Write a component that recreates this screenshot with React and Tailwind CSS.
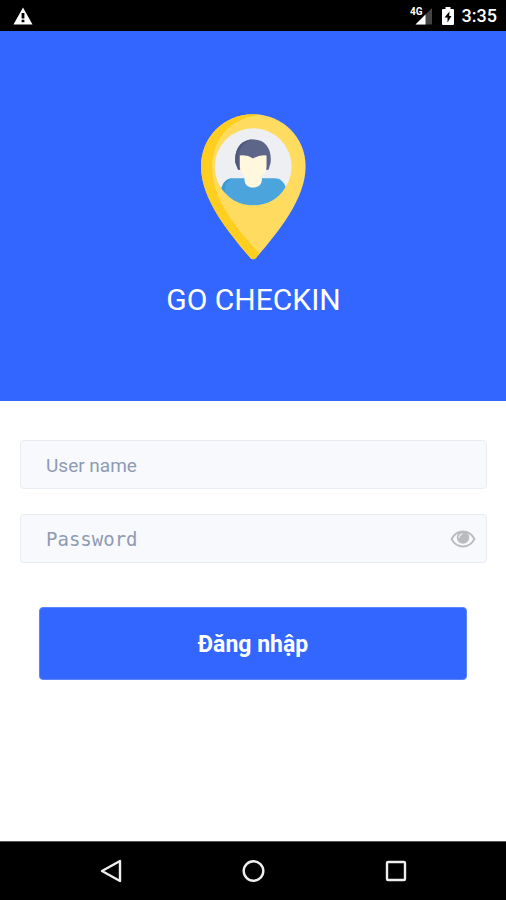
import React, { useState } from 'react';

const StatusBar = () => (
  <div className="flex h-[31px] items-center justify-between bg-black pl-[13px] pr-[9px] pt-px text-white">
    <svg className="h-[18px] w-5" viewBox="0 0 20 18" aria-hidden="true">
      <path d="M10 0.500 19.500 17.500H0.500Z" fill="#fff" />
      <path d="M8.600 6h2.800v5.400H8.600zM8.600 12.800h2.800v2.400H8.600z" fill="#000" />
    </svg>
    <div className="flex items-center">
      {/* 4G signal */}
      <svg className="mr-[9px] h-5 w-[23px]" viewBox="0 0 23 20" aria-hidden="true">
        <path d="M22 2V18.500H5.500Z" fill="#444" />
        <path d="M15.500 8.500V18.500H5.500Z" fill="#fff" />
        <text x="0" y="9" fill="#fff" fontSize="10" fontWeight="700" fontFamily="Roboto, sans-serif">4G</text>
      </svg>
      {/* Battery */}
      <svg className="mr-2 h-5 w-3" viewBox="0 0 12 20" aria-hidden="true">
        <path d="M1 3h2.500V1h5v2H11q1 0 1 1v14q0 1-1 1H1q-1 0-1-1V4q0-1 1-1z" fill="#fff" />
        <path d="M7.500 5.500 2.500 11.500H5.500V16.500L9.500 10H7.200Z" fill="#000" />
      </svg>
      <span className="text-lg leading-5 font-medium">3:35</span>
    </div>
  </div>
);

const PinLogo = () => (
  <svg className="h-[146px] w-[105px]" viewBox="65 41 314 437" aria-hidden="true">
    <path
      d="M221 42C134 42 65 110 65 198C65 296 148 396 212 471Q221 481 230 471C294 396 378 296 378 198C378 110 308 42 221 42Z"
      fill="#ffdc5f"
    />
    <path
      d="M221 42C134 42 65 110 65 198C65 296 148 396 212 471Q221 481 230 471L240 459C168 380 98 296 98 198C98 120 150 54 241 43Z"
      fill="#ffce1e"
    />
    <circle cx="221" cy="199" r="115" fill="#edeff3" />
    <path d="M126 263C132 244 142 233 160 233H285C302 233 313 243 318 260C295 297 262 314 221 314C180 314 148 296 126 263Z" fill="#4ba5dc" />
    <path d="M126 263C132 244 142 233 160 233C143 239 137 252 136 275Q130 270 126 263Z" fill="#3c9bd2" />
    <path d="M168 188C163 146 184 117 221 117C258 117 278 146 273 188L267 208H176Z" fill="#5d6589" />
    <path d="M168 188C164 146 184 117 221 117C190 124 177 145 177 176L180 208H176Z" fill="#50587c" />
    <path
      d="M181 165Q203 162 221 174Q239 162 261 165V198Q261 216 247 225V237C247 252 237 261 221 261C205 261 195 252 195 237V225Q181 216 181 198Z"
      fill="#fff7de"
    />
  </svg>
);

const EyeIcon = () => (
  <svg className="h-[18px] w-[26px]" viewBox="0 0 26 18" fill="none" aria-hidden="true">
    <path d="M1.500 9C7-1 19-1 24.500 9C19 19 7 19 1.500 9Z" stroke="#b9bbbd" strokeWidth="1.800" />
    <circle cx="13" cy="7.500" r="6.200" fill="#b9bbbd" />
    <path d="M9 7.500Q9.500 4.500 12 4" stroke="#e4e6e8" strokeWidth="1.500" strokeLinecap="round" />
  </svg>
);

const NavBar = () => (
  <nav className="grid h-[59px] grid-cols-3 border-t border-[#555] bg-black pr-[39px] pl-10">
    <button type="button" aria-label="Back" className="flex items-center justify-center">
      <svg className="h-6 w-6" viewBox="0 0 24 24" fill="none" stroke="#eee" strokeWidth="2.400" strokeLinejoin="round">
        <path d="M21 2V22L3 12Z" />
      </svg>
    </button>
    <button type="button" aria-label="Home" className="flex items-center justify-center">
      <svg className="h-6 w-6" viewBox="0 0 24 24" fill="none" stroke="#eee" strokeWidth="2.400">
        <circle cx="12.500" cy="12" r="9.800" />
      </svg>
    </button>
    <button type="button" aria-label="Recent apps" className="flex items-center justify-center">
      <svg className="h-6 w-6" viewBox="0 0 24 24" fill="none" stroke="#eee" strokeWidth="2.400">
        <rect x="3" y="3" width="18" height="18" rx="1" />
      </svg>
    </button>
  </nav>
);

const App = () => {
  const [username, setUsername] = useState('');
  const [password, setPassword] = useState('');
  const [showPassword, setShowPassword] = useState(false);

  return (
    <div className="flex min-h-screen flex-col bg-white font-[Roboto,sans-serif]">
      <StatusBar />

      <header className="flex flex-col items-center bg-[#3366ff] pt-[83px] pb-[81px] pl-px">
        <PinLogo />
        <h1 className="mt-5 text-[30px] leading-10 text-white">GO CHECKIN</h1>
      </header>

      <main className="flex-1 pt-[39px] pr-[19px] pl-5">
        <form onSubmit={(e) => e.preventDefault()}>
          <input
            type="text"
            aria-label="User name"
            placeholder="User name"
            value={username}
            onChange={(e) => setUsername(e.target.value)}
            className="block h-[49px] w-full rounded border border-[#e8edf4] bg-[#f7f9fc] px-[25px] pt-px text-[19px] text-[#222b45] outline-none placeholder:text-[#8f9bb3]"
          />

          <div className="mt-[25px] flex h-[49px] items-center rounded border border-[#e8edf4] bg-[#f7f9fc] pt-px pr-[10px] pl-[25px]">
            <input
              type={showPassword ? 'text' : 'password'}
              aria-label="Password"
              placeholder="Password"
              value={password}
              onChange={(e) => setPassword(e.target.value)}
              className="min-w-0 flex-1 bg-transparent font-['DejaVu_Sans_Mono',monospace] text-[19px] text-[#222b45] outline-none placeholder:text-[#8f9bb3]"
            />
            <button type="button" aria-label="Show password" onClick={() => setShowPassword(!showPassword)}>
              <EyeIcon />
            </button>
          </div>

          <div className="mt-11 pr-5 pl-[19px]">
            <button
              type="submit"
              className="h-[73px] w-full rounded border border-[#5c85ff] bg-[#3366ff] pt-[3px] text-[23px] font-bold text-white"
            >
              Đăng nhập
            </button>
          </div>
        </form>
      </main>

      <NavBar />
    </div>
  );
};

export default App;
